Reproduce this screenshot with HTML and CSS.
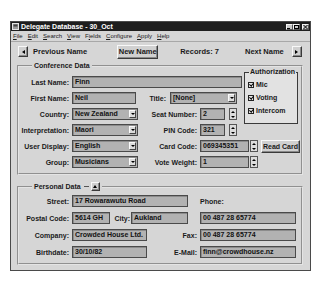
FILE: index.html
```html
<!DOCTYPE html>
<html lang="en">
<head>
    <meta charset="UTF-8">
    <meta name="viewport" content="width=device-width, initial-scale=1.0">
    <title>Delegate Database - 30_Oct</title>
    <link rel="stylesheet" href="styles.css">
</head>
<body>

<div class="window">
    <div class="titlebar">
        <svg class="app-icon" width="7" height="7" viewBox="0 0 7 7">
            <rect x="0.5" y="0.5" width="6" height="6" fill="#9a9a9a" stroke="#e6e6e6"/>
            <rect x="1.5" y="1.5" width="4" height="2" fill="#444"/>
        </svg>
        <span class="title">Delegate Database - 30_Oct</span>
        <div class="caption-buttons">
            <span class="cap-btn">
                <svg width="5" height="4" viewBox="0 0 5 4"><rect x="0" y="3" width="3" height="1" fill="#000"/></svg>
            </span>
            <span class="cap-btn">
                <svg width="5" height="4" viewBox="0 0 5 4"><rect x="0.5" y="0.5" width="4" height="3" fill="none" stroke="#000"/></svg>
            </span>
            <span class="cap-btn close">
                <svg width="5" height="4" viewBox="0 0 5 4"><path d="M0.5 0 L4.5 4 M4.5 0 L0.5 4" stroke="#000" stroke-width="1"/></svg>
            </span>
        </div>
    </div>

    <div class="menubar">
        <span><u>F</u>ile</span>
        <span><u>E</u>dit</span>
        <span><u>S</u>earch</span>
        <span><u>V</u>iew</span>
        <span>F<u>i</u>elds</span>
        <span><u>C</u>onfigure</span>
        <span><u>A</u>pply</span>
        <span><u>H</u>elp</span>
    </div>

    <div class="toolbar">
        <button class="arrow-btn"><span class="tri-left"></span></button>
        <span class="nav-label prev">Previous Name</span>
        <button class="btn new-name">New Name</button>
        <span class="records">Records: 7</span>
        <span class="nav-label next">Next Name</span>
        <button class="arrow-btn"><span class="tri-right"></span></button>
    </div>

    <fieldset class="group conference">
        <legend>Conference Data</legend>
        <div class="conf-grid">
            <label class="lbl c-l1">Last Name:</label>
            <div class="field last-name">Finn</div>

            <label class="lbl c-l1">First Name:</label>
            <div class="field first-name">Neil</div>
            <div class="title-cell">
                <label class="lbl">Title:</label>
                <div class="field combo title-combo"><span>[None]</span><span class="drop"></span></div>
            </div>

            <label class="lbl c-l1">Country:</label>
            <div class="field combo left-combo"><span>New Zealand</span><span class="drop"></span></div>
            <label class="lbl c-l2">Seat Number:</label>
            <div class="spin-field short"><div class="field">2</div><span class="spin"></span></div>

            <label class="lbl c-l1">Interpretation:</label>
            <div class="field combo left-combo"><span>Maori</span><span class="drop"></span></div>
            <label class="lbl c-l2">PIN Code:</label>
            <div class="spin-field short"><div class="field">321</div><span class="spin"></span></div>

            <label class="lbl c-l1">User Display:</label>
            <div class="field combo left-combo"><span>English</span><span class="drop"></span></div>
            <label class="lbl c-l2">Card Code:</label>
            <div class="spin-field long"><div class="field">069345351</div><span class="spin"></span></div>
            <button class="btn read-card">Read Card</button>

            <label class="lbl c-l1">Group:</label>
            <div class="field combo left-combo"><span>Musicians</span><span class="drop"></span></div>
            <label class="lbl c-l2">Vote Weight:</label>
            <div class="spin-field long"><div class="field">1</div><span class="spin"></span></div>

            <fieldset class="auth">
                <legend>Authorization</legend>
                <div class="check"><span class="box"></span>Mic</div>
                <div class="check"><span class="box"></span>Voting</div>
                <div class="check"><span class="box"></span>Intercom</div>
            </fieldset>
        </div>
    </fieldset>

    <fieldset class="group personal">
        <legend>Personal Data <span class="dash"></span><button class="arrow-btn small"><span class="tri-up"></span></button></legend>
        <div class="pers-grid">
            <label class="lbl p-l1">Street:</label>
            <div class="field street">17 Rowarawutu Road</div>
            <span class="phone-head">Phone:</span>

            <label class="lbl p-l1">Postal Code:</label>
            <div class="field postal">5614 GH</div>
            <label class="lbl city-lbl">City:</label>
            <div class="field city">Aukland</div>
            <div class="field wide">00 487 28 65774</div>

            <label class="lbl p-l1">Company:</label>
            <div class="field mid">Crowded House Ltd.</div>
            <label class="lbl p-l2">Fax:</label>
            <div class="field wide">00 487 28 65774</div>

            <label class="lbl p-l1">Birthdate:</label>
            <div class="field mid">30/10/82</div>
            <label class="lbl p-l2">E-Mail:</label>
            <div class="field wide">finn@crowdhouse.nz</div>
        </div>
    </fieldset>
</div>

</body>
</html>
```

FILE: styles.css
```css
body {
    margin: 0;
    background: #ffffff;
    font-family: "Liberation Sans", Arial, sans-serif;
    font-size: 7px;
    font-weight: bold;
    color: #1a1a1a;
}
.window {
    margin: 21px 0 0 10px;
    width: 301px;
    height: 250px;
    box-sizing: border-box;
    border: 1px solid #4a4a4a;
    background: #d6d6d6;
}

/* title bar */
.titlebar {
    height: 9px;
    display: flex;
    align-items: center;
    gap: 2px;
    padding: 0 1px;
    background: #1e1e1e;
    color: #ffffff;
    font-size: 7px;
}
.app-icon {
    display: block;
}
.caption-buttons {
    margin-left: auto;
    display: flex;
    gap: 0;
}
.cap-btn {
    width: 7px;
    height: 6px;
    box-sizing: border-box;
    background: #c8c8c8;
    border: 1px solid;
    border-color: #f4f4f4 #555 #555 #f4f4f4;
    display: flex;
    align-items: center;
    justify-content: center;
}
.cap-btn svg {
    display: block;
}
.cap-btn.close {
    margin-left: 2px;
}

/* menu */
.menubar {
    height: 10px;
    display: flex;
    align-items: center;
    gap: 5px;
    padding-left: 2px;
    font-size: 6px;
    font-weight: normal;
    border-bottom: 1px solid #a8a8a8;
}

/* toolbar */
.toolbar {
    height: 19px;
    display: flex;
    align-items: center;
    padding-left: 7px;
    font-size: 7.5px;
}
button {
    font-family: inherit;
    font-weight: bold;
    color: #1a1a1a;
    padding: 0;
    margin: 0;
    background: #d0d0d0;
    border: 1px solid;
    border-color: #f8f8f8 #3a3a3a #3a3a3a #f8f8f8;
    box-shadow: inset -1px -1px 0 #8a8a8a;
    box-sizing: border-box;
}
.arrow-btn {
    width: 10px;
    height: 11px;
    display: flex;
    align-items: center;
    justify-content: center;
}
.tri-left, .tri-right, .tri-up {
    width: 0;
    height: 0;
    border: 2.5px solid transparent;
}
.tri-left {
    border-right: 3px solid #000;
    border-left: 0;
}
.tri-right {
    border-left: 3px solid #000;
    border-right: 0;
}
.tri-up {
    border-bottom: 3px solid #000;
    border-top: 0;
}
.nav-label.prev {
    margin-left: 5px;
}
.new-name {
    margin-left: 30px;
    width: 41px;
    height: 14px;
    font-size: 7.5px;
}
.records {
    margin-left: 22px;
}
.nav-label.next {
    margin-left: 26px;
}
.toolbar .arrow-btn:last-child {
    margin-left: 8px;
}

/* group boxes */
.group {
    margin: 1px 7px 0 6px;
    padding: 0;
    border: 2px groove #e4e4e4;
    min-inline-size: 0;
}
.group > legend {
    margin-left: 13px;
    padding: 0 2px;
    line-height: 8px;
    font-size: 7px;
}
.conference {
    padding: 6px 0 5px 0;
}
.conf-grid {
    display: grid;
    grid-template-columns: 50px 3px 66px 59px 3px 42px 19px 39px;
    grid-template-rows: repeat(6, 12px);
    row-gap: 4px;
    align-items: center;
}
.lbl {
    text-align: right;
    white-space: nowrap;
}
.c-l1 {
    grid-column: 1;
}
.c-l2 {
    grid-column: 4;
}
.field {
    height: 12px;
    box-sizing: border-box;
    background: #b2b2b2;
    border: 1px solid #4a4a4a;
    box-shadow: inset 1px 1px 0 #8c8c8c;
    padding-left: 2px;
    line-height: 10px;
    white-space: nowrap;
    overflow: hidden;
    color: #111;
}
.last-name {
    grid-column: 3 / span 4;
}
.first-name {
    grid-column: 3;
    width: 64px;
}
.left-combo {
    grid-column: 3;
    width: 66px;
}
.combo {
    display: flex;
    align-items: center;
    justify-content: space-between;
    padding-right: 1px;
}
.drop {
    width: 7px;
    height: 8px;
    box-sizing: border-box;
    background: #dcdcdc;
    border: 1px solid;
    border-color: #fafafa #444 #444 #fafafa;
    display: flex;
    align-items: center;
    justify-content: center;
}
.drop::after {
    content: "";
    border: 2px solid transparent;
    border-top: 2px solid #000;
    border-bottom: 0;
}
.title-cell {
    grid-column: 4 / span 3;
    display: flex;
    align-items: center;
    justify-content: flex-end;
    gap: 4px;
    padding-right: 5px;
}
.title-combo {
    width: 67px;
}
.spin-field {
    display: flex;
    align-items: center;
    justify-content: space-between;
}
.spin-field.short {
    grid-column: 6;
    width: 37px;
}
.spin-field.short .field {
    width: 25px;
}
.spin-field.long {
    grid-column: 6 / span 2;
    width: 58px;
}
.spin-field.long .field {
    width: 49px;
}
.spin {
    width: 8px;
    height: 12px;
    box-sizing: border-box;
    background: #dcdcdc;
    border: 1px solid #555;
    display: flex;
    flex-direction: column;
    align-items: center;
    justify-content: space-around;
}
.spin::before {
    content: "";
    border: 2px solid transparent;
    border-bottom: 2px solid #000;
    border-top: 0;
}
.spin::after {
    content: "";
    border: 2px solid transparent;
    border-top: 2px solid #000;
    border-bottom: 0;
}
.read-card {
    grid-column: 8;
    height: 13px;
    font-size: 7px;
}
.auth {
    grid-column: 7 / span 2;
    grid-row: 1 / span 4;
    align-self: start;
    margin: -8px 0 0 2px;
    width: 54px;
    height: 56px;
    box-sizing: border-box;
    padding: 2px 0 0 3px;
    border: 1px solid #3a3a3a;
    min-inline-size: 0;
    background: #e2e2e2;
}
.auth legend {
    padding: 0 1px;
    line-height: 8px;
    margin-left: 1px;
    font-size: 7px;
}
.check {
    display: flex;
    align-items: center;
    gap: 2px;
    height: 13px;
}
.box {
    width: 6px;
    height: 6px;
    box-sizing: border-box;
    border: 1px solid #222;
    background: #e8e8e8;
    position: relative;
}
.box::after {
    content: "";
    position: absolute;
    left: 1px;
    top: -1px;
    width: 1.5px;
    height: 3px;
    border: solid #000;
    border-width: 0 1px 1px 0;
    transform: rotate(40deg);
}

/* personal data */
.personal {
    margin-top: 7px;
    padding: 4px 0 5px 0;
}
.personal > legend {
    display: flex;
    align-items: center;
    line-height: 9px;
}
.dash {
    width: 5px;
    height: 1px;
    background: #555;
    margin: 0 2px 0 3px;
}
.arrow-btn.small {
    width: 9px;
    height: 9px;
}
.pers-grid {
    display: grid;
    grid-template-columns: 50px 3px 38px 21px 16px 41px 9px 3px 96px;
    grid-template-rows: repeat(4, 12px);
    row-gap: 5px;
    align-items: center;
}
.p-l1 {
    grid-column: 1;
}
.street {
    grid-column: 3 / span 4;
}
.phone-head {
    grid-column: 9;
}
.postal {
    grid-column: 3;
}
.city-lbl {
    grid-column: 4;
    padding-right: 1px;
}
.city {
    grid-column: 5 / span 2;
}
.wide {
    grid-column: 9;
}
.mid {
    grid-column: 3 / span 3;
}
.p-l2 {
    grid-column: 6 / span 2;
}
```
